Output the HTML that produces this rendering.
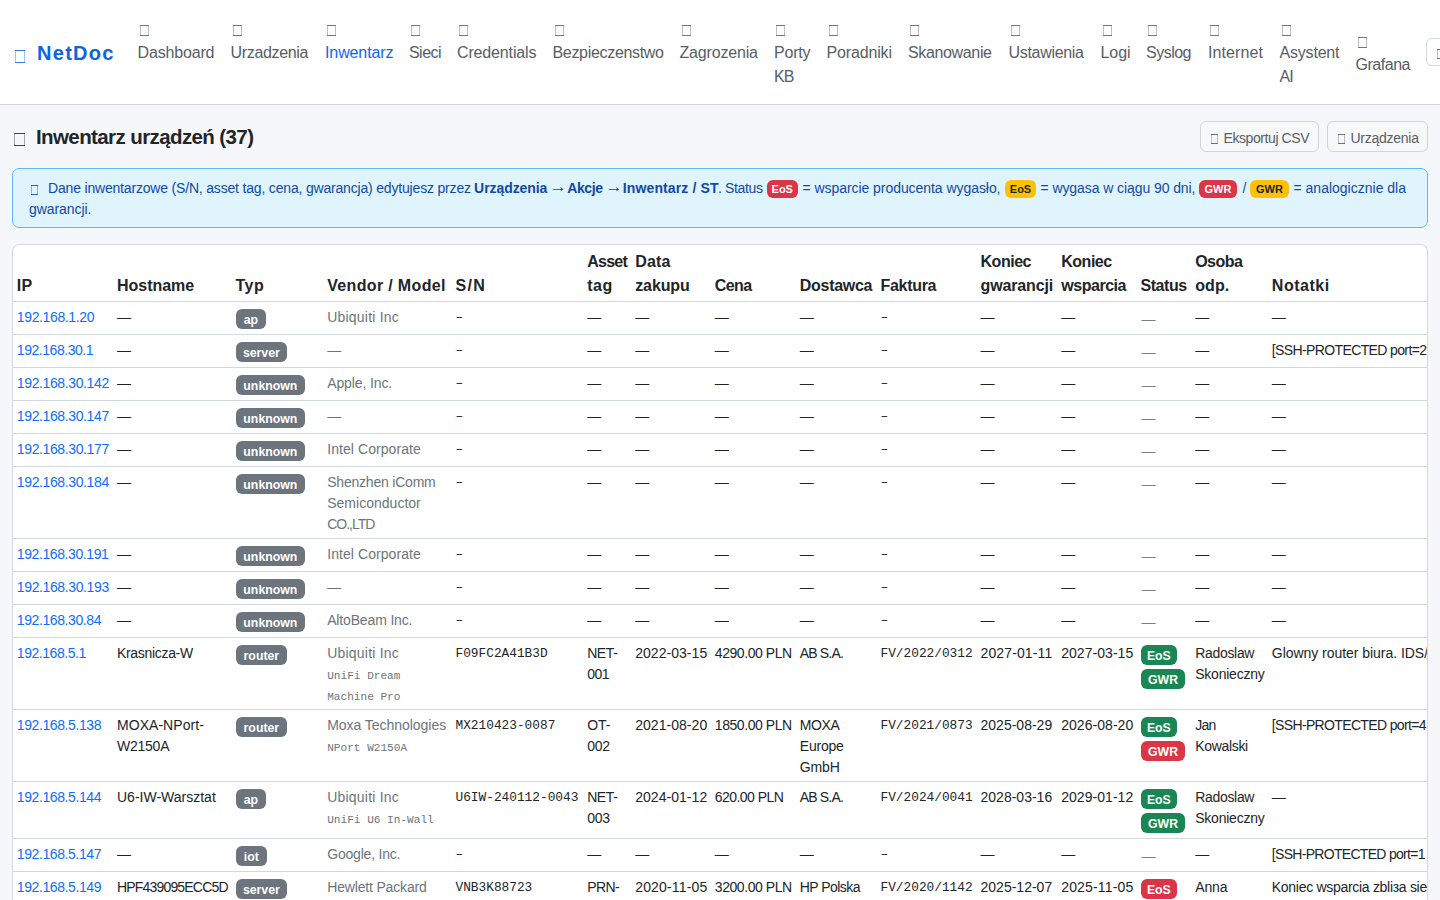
<!DOCTYPE html>
<html lang="pl"><head><meta charset="utf-8"><title>NetDoc - Inwentarz</title>
<style>
*{box-sizing:border-box}
html,body{margin:0;padding:0}
body{width:1440px;height:900px;overflow:hidden;background:#f6f7fa;font-family:"Liberation Sans",sans-serif;color:#212529;position:relative}
.tf{display:inline-block;position:relative;width:9px;height:11px;border:solid currentColor;border-width:1px 0;opacity:.85}
.tf::before{content:"";position:absolute;left:0;right:0;top:0;bottom:0;border:solid currentColor;border-width:0 1px;opacity:.45}
#nav{position:absolute;left:0;top:0;width:1440px;height:105px;background:#fff;border-bottom:1px solid #d2d7e0}
#brand{position:absolute;left:15px;top:39px;font-size:20px;font-weight:700;color:#0c64e4;line-height:28px;white-space:nowrap}
#brand .tf{width:10px;height:13px;margin-right:12px;position:relative;top:3px}
.ni{position:absolute;top:19px;font-size:16px;line-height:24px;color:#565e66;white-space:nowrap}
.ni .tf{display:block;margin:6px 0 5px 2px;height:11px;width:9px}
.ni.act{color:#0d69f0}
#navbtn{position:absolute;left:1426px;top:38px;width:40px;height:28px;border:1px solid #d2d7e0;border-radius:6px;background:#fff;color:#565e66}
#navbtn .tf{position:absolute;left:10px;top:10px;width:8px;height:10px}
h1{position:absolute;left:14px;top:123px;margin:0;font-size:20.5px;line-height:28px;font-weight:700;color:#212529;white-space:nowrap}
h1 .tf{width:11px;height:13px;margin-right:11px;position:relative;top:2px}
.btn{position:absolute;top:121px;height:31px;border:1px solid #d0d5dd;border-radius:6px;font-size:14px;line-height:32px;color:#565e66;padding:0 0 0 10px;white-space:nowrap;background:#f7f8fa}
.btn .tf{width:7px;height:10px;margin-right:5.5px;position:relative;top:1px}
#alert{position:absolute;left:12px;top:168px;width:1416px;height:60px;background:#e0f4fe;border:1px solid #64b5f6;border-radius:7px;color:#0f4aa6;font-size:14px;line-height:21px}
#alert span{position:absolute;white-space:nowrap}
#alert span span{position:static}
#alert .b{font-weight:700}
#alert .tf{width:7px;height:10px}
#alert .ab{font-size:11px;font-weight:700;line-height:18px;height:18px;border-radius:6px;color:#fff;text-align:center}
.ab.r{background:#dc3545}.ab.y{background:#ffc107;color:#212529 !important}
#card{position:absolute;left:12px;top:244px;width:1416px;height:700px;background:#fff;border:1px solid #d2d7e0;border-radius:7px;overflow:hidden}
table{border-collapse:collapse;table-layout:fixed;position:absolute;left:0;top:0;width:1755px}
th,td{padding:5px 4px 3px;vertical-align:top;text-align:left;border-bottom:1px solid #d2d7e0;white-space:nowrap;overflow:visible}
th{font-size:16px;line-height:24px;font-weight:700;vertical-align:bottom;color:#212529;height:56px;padding:4px 4px 3px}
th .l{height:24px}
td{font-size:14px;line-height:21px;color:#212529}
td .l{height:21px}
td .bl{height:24px;padding-top:2px}
a.ip{color:#0d6efd}
.mut{color:#6c757d}
.mono{font-family:"Liberation Mono",monospace;font-size:12.8px;line-height:1;position:relative;top:-1px}
.mm{font-family:"Liberation Mono",monospace;font-size:11.1px;color:#6c757d;line-height:1}
.sd{color:#78808a;font-size:14px;position:relative;top:2px;left:1px}
.bdg{display:block;font-size:12.3px;font-weight:700;line-height:22px;height:20px;border-radius:6px;color:#fff;text-align:center}
.sec{background:#6c757d}.ok{background:#198754}.bad{background:#dc3545}

</style></head><body>
<div id="nav">
<div id="brand"><span class="tf"></span><span style="letter-spacing:1.297px">NetDoc</span></div>
<div class="ni" style="left:137.5px"><span class="tf"></span><span style="letter-spacing:-0.160px">Dashboard</span></div>
<div class="ni" style="left:230.5px"><span class="tf"></span><span style="letter-spacing:-0.326px">Urzadzenia</span></div>
<div class="ni act" style="left:325px"><span class="tf"></span><span style="letter-spacing:-0.109px">Inwentarz</span></div>
<div class="ni" style="left:409px"><span class="tf"></span><span style="letter-spacing:-0.547px">Sieci</span></div>
<div class="ni" style="left:457px"><span class="tf"></span><span style="letter-spacing:-0.144px">Credentials</span></div>
<div class="ni" style="left:552.5px"><span class="tf"></span><span style="letter-spacing:-0.317px">Bezpieczenstwo</span></div>
<div class="ni" style="left:679.5px"><span class="tf"></span><span style="letter-spacing:-0.172px">Zagrozenia</span></div>
<div class="ni" style="left:774px"><span class="tf"></span><span style="letter-spacing:-0.211px">Porty</span><br><span style="letter-spacing:-1.000px">KB</span></div>
<div class="ni" style="left:826.5px"><span class="tf"></span><span style="letter-spacing:-0.150px">Poradniki</span></div>
<div class="ni" style="left:908px"><span class="tf"></span><span style="letter-spacing:-0.352px">Skanowanie</span></div>
<div class="ni" style="left:1008.5px"><span class="tf"></span><span style="letter-spacing:-0.307px">Ustawienia</span></div>
<div class="ni" style="left:1100.5px"><span class="tf"></span><span style="letter-spacing:-0.083px">Logi</span></div>
<div class="ni" style="left:1146px"><span class="tf"></span><span style="letter-spacing:-0.506px">Syslog</span></div>
<div class="ni" style="left:1208px"><span class="tf"></span><span style="letter-spacing:0.105px">Internet</span></div>
<div class="ni" style="left:1279.5px"><span class="tf"></span><span style="letter-spacing:-0.194px">Asystent</span><br><span style="letter-spacing:-1.000px">AI</span></div>
<div class="ni" style="left:1355.5px;top:31px"><span class="tf"></span><span style="letter-spacing:-0.469px">Grafana</span></div>
<div id="navbtn"><span class="tf"></span></div>
</div>
<h1><span class="tf"></span><span style="letter-spacing:-0.602px">Inwentarz urządzeń (37)</span></h1>
<div class="btn" style="left:1200px;width:119px"><span class="tf"></span><span style="letter-spacing:-0.421px">Eksportuj CSV</span></div>
<div class="btn" style="left:1327px;width:101px"><span class="tf"></span><span style="letter-spacing:-0.259px">Urządzenia</span></div>
<div id="alert">
<span class="tf" style="left:18px;top:16px"></span>
<span style="left:35px;top:9px"><span style="letter-spacing:-0.182px">Dane inwentarzowe (S/N, asset tag, cena, gwarancja) edytujesz przez</span></span>
<span class="b" style="left:461.1px;top:9px"><span style="letter-spacing:-0.069px">Urządzenia</span></span>
<span class="b" style="left:536.8px;top:7px;font-size:17px">→</span>
<span class="b" style="left:554.2px;top:9px"><span style="letter-spacing:-0.390px">Akcje</span></span>
<span class="b" style="left:592.5px;top:7px;font-size:17px">→</span>
<span class="b" style="left:609.8px;top:9px"><span style="letter-spacing:0.121px">Inwentarz / ST</span></span>
<span style="left:705px;top:9px"><span style="letter-spacing:-0.353px">. Status</span></span>
<span style="left:789.5px;top:9px"><span style="letter-spacing:-0.055px">= wsparcie producenta wygasło,</span></span>
<span style="left:1027.5px;top:9px"><span style="letter-spacing:-0.079px">= wygasa w ciągu 90 dni,</span></span>
<span style="left:1229.5px;top:9px"><span style="letter-spacing:1.500px">/</span></span>
<span style="left:1280.5px;top:9px"><span style="letter-spacing:0.001px">= analogicznie dla</span></span>
<span class="ab r" style="left:753.5px;top:11px;width:31.5px">EoS</span>
<span class="ab y" style="left:992px;top:11px;width:31px">EoS</span>
<span class="ab r" style="left:1186px;top:11px;width:38px">GWR</span>
<span class="ab y" style="left:1237px;top:11px;width:39px">GWR</span>
<span style="left:16px;top:30px"><span style="letter-spacing:-0.059px">gwarancji.</span></span>
</div>
<div id="card"><table><colgroup><col style="width:100px"><col style="width:119px"><col style="width:91px"><col style="width:129px"><col style="width:131px"><col style="width:48px"><col style="width:80px"><col style="width:85px"><col style="width:81px"><col style="width:100px"><col style="width:81px"><col style="width:79px"><col style="width:54px"><col style="width:77px"><col style="width:500px"></colgroup>
<thead><tr><th><div class="l" style="margin-left:-0.2px"><span style="letter-spacing:0.275px">IP</span></div></th><th><div class="l" style="margin-left:0.0px"><span style="letter-spacing:-0.023px">Hostname</span></div></th><th><div class="l" style="margin-left:-0.5px"><span style="letter-spacing:0.517px">Typ</span></div></th><th><div class="l" style="margin-left:0.2px"><span style="letter-spacing:0.346px">Vendor / Model</span></div></th><th><div class="l" style="margin-left:-0.5px"><span style="letter-spacing:1.314px">S/N</span></div></th><th><div class="l" style="margin-left:0.2px"><span style="letter-spacing:-0.745px">Asset</span></div><div class="l" style="margin-left:0.2px"><span style="letter-spacing:0.500px">tag</span></div></th><th><div class="l" style="margin-left:0.2px"><span style="letter-spacing:0.204px">Data</span></div><div class="l" style="margin-left:0.2px"><span style="letter-spacing:-0.105px">zakupu</span></div></th><th><div class="l" style="margin-left:-0.2px"><span style="letter-spacing:-0.575px">Cena</span></div></th><th><div class="l" style="margin-left:-0.2px"><span style="letter-spacing:-0.286px">Dostawca</span></div></th><th><div class="l" style="margin-left:-0.5px"><span style="letter-spacing:-0.299px">Faktura</span></div></th><th><div class="l" style="margin-left:-0.5px"><span style="letter-spacing:-0.469px">Koniec</span></div><div class="l" style="margin-left:-0.5px"><span style="letter-spacing:-0.139px">gwarancji</span></div></th><th><div class="l" style="margin-left:-0.8px"><span style="letter-spacing:-0.469px">Koniec</span></div><div class="l" style="margin-left:-0.8px"><span style="letter-spacing:-0.455px">wsparcia</span></div></th><th><div class="l" style="margin-left:-0.5px"><span style="letter-spacing:-0.441px">Status</span></div></th><th><div class="l" style="margin-left:0.2px"><span style="letter-spacing:-0.549px">Osoba</span></div><div class="l" style="margin-left:0.2px"><span style="letter-spacing:0.078px">odp.</span></div></th><th><div class="l" style="margin-left:-0.2px"><span style="letter-spacing:0.528px">Notatki</span></div></th></tr></thead><tbody>
<tr style="height:33px"><td><div class="l" style="margin-left:-0.2px"><a class="ip"><span style="letter-spacing:-0.368px">192.168.1.20</span></a></div></td><td><div class="l" style="margin-left:0.0px"><span class="d">—</span></div></td><td><div class="bl" style="margin-left:0.0px"><span class="bdg sec" style="width:29.7px">ap</span></div></td><td><div class="l" style="margin-left:0.2px"><span class="mut"><span style="letter-spacing:0.212px">Ubiquiti Inc</span></span></div></td><td><div class="l" style="margin-left:-0.5px"><span class="mono">–</span></div></td><td><div class="l" style="margin-left:0.2px"><span class="d">—</span></div></td><td><div class="l" style="margin-left:0.2px"><span class="d">—</span></div></td><td><div class="l" style="margin-left:-0.2px"><span class="d">—</span></div></td><td><div class="l" style="margin-left:-0.2px"><span class="d">—</span></div></td><td><div class="l" style="margin-left:-0.5px"><span class="mono">–</span></div></td><td><div class="l" style="margin-left:-0.5px"><span class="d">—</span></div></td><td><div class="l" style="margin-left:-0.8px"><span class="d">—</span></div></td><td><div class="l" style="margin-left:-0.5px"><span class="sd">—</span></div></td><td><div class="l" style="margin-left:0.2px"><span class="d">—</span></div></td><td><div class="l" style="margin-left:-0.2px"><span class="d">—</span></div></td></tr>
<tr style="height:33px"><td><div class="l" style="margin-left:-0.2px"><a class="ip"><span style="letter-spacing:-0.459px">192.168.30.1</span></a></div></td><td><div class="l" style="margin-left:0.0px"><span class="d">—</span></div></td><td><div class="bl" style="margin-left:0.0px"><span class="bdg sec" style="width:50.7px">server</span></div></td><td><div class="l" style="margin-left:0.2px"><span class="mut"><span class="d">—</span></span></div></td><td><div class="l" style="margin-left:-0.5px"><span class="mono">–</span></div></td><td><div class="l" style="margin-left:0.2px"><span class="d">—</span></div></td><td><div class="l" style="margin-left:0.2px"><span class="d">—</span></div></td><td><div class="l" style="margin-left:-0.2px"><span class="d">—</span></div></td><td><div class="l" style="margin-left:-0.2px"><span class="d">—</span></div></td><td><div class="l" style="margin-left:-0.5px"><span class="mono">–</span></div></td><td><div class="l" style="margin-left:-0.5px"><span class="d">—</span></div></td><td><div class="l" style="margin-left:-0.8px"><span class="d">—</span></div></td><td><div class="l" style="margin-left:-0.5px"><span class="sd">—</span></div></td><td><div class="l" style="margin-left:0.2px"><span class="d">—</span></div></td><td><div class="l" style="margin-left:-0.2px"><span style="letter-spacing:-0.623px">[SSH-PROTECTED port=2</span></div></td></tr>
<tr style="height:33px"><td><div class="l" style="margin-left:-0.2px"><a class="ip"><span style="letter-spacing:-0.379px">192.168.30.142</span></a></div></td><td><div class="l" style="margin-left:0.0px"><span class="d">—</span></div></td><td><div class="bl" style="margin-left:0.0px"><span class="bdg sec" style="width:68.7px">unknown</span></div></td><td><div class="l" style="margin-left:0.2px"><span class="mut"><span style="letter-spacing:-0.116px">Apple, Inc.</span></span></div></td><td><div class="l" style="margin-left:-0.5px"><span class="mono">–</span></div></td><td><div class="l" style="margin-left:0.2px"><span class="d">—</span></div></td><td><div class="l" style="margin-left:0.2px"><span class="d">—</span></div></td><td><div class="l" style="margin-left:-0.2px"><span class="d">—</span></div></td><td><div class="l" style="margin-left:-0.2px"><span class="d">—</span></div></td><td><div class="l" style="margin-left:-0.5px"><span class="mono">–</span></div></td><td><div class="l" style="margin-left:-0.5px"><span class="d">—</span></div></td><td><div class="l" style="margin-left:-0.8px"><span class="d">—</span></div></td><td><div class="l" style="margin-left:-0.5px"><span class="sd">—</span></div></td><td><div class="l" style="margin-left:0.2px"><span class="d">—</span></div></td><td><div class="l" style="margin-left:-0.2px"><span class="d">—</span></div></td></tr>
<tr style="height:33px"><td><div class="l" style="margin-left:-0.2px"><a class="ip"><span style="letter-spacing:-0.379px">192.168.30.147</span></a></div></td><td><div class="l" style="margin-left:0.0px"><span class="d">—</span></div></td><td><div class="bl" style="margin-left:0.0px"><span class="bdg sec" style="width:68.7px">unknown</span></div></td><td><div class="l" style="margin-left:0.2px"><span class="mut"><span class="d">—</span></span></div></td><td><div class="l" style="margin-left:-0.5px"><span class="mono">–</span></div></td><td><div class="l" style="margin-left:0.2px"><span class="d">—</span></div></td><td><div class="l" style="margin-left:0.2px"><span class="d">—</span></div></td><td><div class="l" style="margin-left:-0.2px"><span class="d">—</span></div></td><td><div class="l" style="margin-left:-0.2px"><span class="d">—</span></div></td><td><div class="l" style="margin-left:-0.5px"><span class="mono">–</span></div></td><td><div class="l" style="margin-left:-0.5px"><span class="d">—</span></div></td><td><div class="l" style="margin-left:-0.8px"><span class="d">—</span></div></td><td><div class="l" style="margin-left:-0.5px"><span class="sd">—</span></div></td><td><div class="l" style="margin-left:0.2px"><span class="d">—</span></div></td><td><div class="l" style="margin-left:-0.2px"><span class="d">—</span></div></td></tr>
<tr style="height:33px"><td><div class="l" style="margin-left:-0.2px"><a class="ip"><span style="letter-spacing:-0.379px">192.168.30.177</span></a></div></td><td><div class="l" style="margin-left:0.0px"><span class="d">—</span></div></td><td><div class="bl" style="margin-left:0.0px"><span class="bdg sec" style="width:68.7px">unknown</span></div></td><td><div class="l" style="margin-left:0.2px"><span class="mut"><span style="letter-spacing:0.071px">Intel Corporate</span></span></div></td><td><div class="l" style="margin-left:-0.5px"><span class="mono">–</span></div></td><td><div class="l" style="margin-left:0.2px"><span class="d">—</span></div></td><td><div class="l" style="margin-left:0.2px"><span class="d">—</span></div></td><td><div class="l" style="margin-left:-0.2px"><span class="d">—</span></div></td><td><div class="l" style="margin-left:-0.2px"><span class="d">—</span></div></td><td><div class="l" style="margin-left:-0.5px"><span class="mono">–</span></div></td><td><div class="l" style="margin-left:-0.5px"><span class="d">—</span></div></td><td><div class="l" style="margin-left:-0.8px"><span class="d">—</span></div></td><td><div class="l" style="margin-left:-0.5px"><span class="sd">—</span></div></td><td><div class="l" style="margin-left:0.2px"><span class="d">—</span></div></td><td><div class="l" style="margin-left:-0.2px"><span class="d">—</span></div></td></tr>
<tr style="height:72px"><td><div class="l" style="margin-left:-0.2px"><a class="ip"><span style="letter-spacing:-0.379px">192.168.30.184</span></a></div></td><td><div class="l" style="margin-left:0.0px"><span class="d">—</span></div></td><td><div class="bl" style="margin-left:0.0px"><span class="bdg sec" style="width:68.7px">unknown</span></div></td><td><div class="l" style="margin-left:0.2px"><span class="mut"><span style="letter-spacing:-0.206px">Shenzhen iComm</span></span></div><div class="l" style="margin-left:0.2px"><span class="mut"><span style="letter-spacing:0.017px">Semiconductor</span></span></div><div class="l" style="margin-left:0.2px"><span class="mut"><span style="letter-spacing:-1.000px">CO.,LTD</span></span></div></td><td><div class="l" style="margin-left:-0.5px"><span class="mono">–</span></div></td><td><div class="l" style="margin-left:0.2px"><span class="d">—</span></div></td><td><div class="l" style="margin-left:0.2px"><span class="d">—</span></div></td><td><div class="l" style="margin-left:-0.2px"><span class="d">—</span></div></td><td><div class="l" style="margin-left:-0.2px"><span class="d">—</span></div></td><td><div class="l" style="margin-left:-0.5px"><span class="mono">–</span></div></td><td><div class="l" style="margin-left:-0.5px"><span class="d">—</span></div></td><td><div class="l" style="margin-left:-0.8px"><span class="d">—</span></div></td><td><div class="l" style="margin-left:-0.5px"><span class="sd">—</span></div></td><td><div class="l" style="margin-left:0.2px"><span class="d">—</span></div></td><td><div class="l" style="margin-left:-0.2px"><span class="d">—</span></div></td></tr>
<tr style="height:33px"><td><div class="l" style="margin-left:-0.2px"><a class="ip"><span style="letter-spacing:-0.410px">192.168.30.191</span></a></div></td><td><div class="l" style="margin-left:0.0px"><span class="d">—</span></div></td><td><div class="bl" style="margin-left:0.0px"><span class="bdg sec" style="width:68.7px">unknown</span></div></td><td><div class="l" style="margin-left:0.2px"><span class="mut"><span style="letter-spacing:0.071px">Intel Corporate</span></span></div></td><td><div class="l" style="margin-left:-0.5px"><span class="mono">–</span></div></td><td><div class="l" style="margin-left:0.2px"><span class="d">—</span></div></td><td><div class="l" style="margin-left:0.2px"><span class="d">—</span></div></td><td><div class="l" style="margin-left:-0.2px"><span class="d">—</span></div></td><td><div class="l" style="margin-left:-0.2px"><span class="d">—</span></div></td><td><div class="l" style="margin-left:-0.5px"><span class="mono">–</span></div></td><td><div class="l" style="margin-left:-0.5px"><span class="d">—</span></div></td><td><div class="l" style="margin-left:-0.8px"><span class="d">—</span></div></td><td><div class="l" style="margin-left:-0.5px"><span class="sd">—</span></div></td><td><div class="l" style="margin-left:0.2px"><span class="d">—</span></div></td><td><div class="l" style="margin-left:-0.2px"><span class="d">—</span></div></td></tr>
<tr style="height:33px"><td><div class="l" style="margin-left:-0.2px"><a class="ip"><span style="letter-spacing:-0.379px">192.168.30.193</span></a></div></td><td><div class="l" style="margin-left:0.0px"><span class="d">—</span></div></td><td><div class="bl" style="margin-left:0.0px"><span class="bdg sec" style="width:68.7px">unknown</span></div></td><td><div class="l" style="margin-left:0.2px"><span class="mut"><span class="d">—</span></span></div></td><td><div class="l" style="margin-left:-0.5px"><span class="mono">–</span></div></td><td><div class="l" style="margin-left:0.2px"><span class="d">—</span></div></td><td><div class="l" style="margin-left:0.2px"><span class="d">—</span></div></td><td><div class="l" style="margin-left:-0.2px"><span class="d">—</span></div></td><td><div class="l" style="margin-left:-0.2px"><span class="d">—</span></div></td><td><div class="l" style="margin-left:-0.5px"><span class="mono">–</span></div></td><td><div class="l" style="margin-left:-0.5px"><span class="d">—</span></div></td><td><div class="l" style="margin-left:-0.8px"><span class="d">—</span></div></td><td><div class="l" style="margin-left:-0.5px"><span class="sd">—</span></div></td><td><div class="l" style="margin-left:0.2px"><span class="d">—</span></div></td><td><div class="l" style="margin-left:-0.2px"><span class="d">—</span></div></td></tr>
<tr style="height:33px"><td><div class="l" style="margin-left:-0.2px"><a class="ip"><span style="letter-spacing:-0.403px">192.168.30.84</span></a></div></td><td><div class="l" style="margin-left:0.0px"><span class="d">—</span></div></td><td><div class="bl" style="margin-left:0.0px"><span class="bdg sec" style="width:68.7px">unknown</span></div></td><td><div class="l" style="margin-left:0.2px"><span class="mut"><span style="letter-spacing:-0.155px">AltoBeam Inc.</span></span></div></td><td><div class="l" style="margin-left:-0.5px"><span class="mono">–</span></div></td><td><div class="l" style="margin-left:0.2px"><span class="d">—</span></div></td><td><div class="l" style="margin-left:0.2px"><span class="d">—</span></div></td><td><div class="l" style="margin-left:-0.2px"><span class="d">—</span></div></td><td><div class="l" style="margin-left:-0.2px"><span class="d">—</span></div></td><td><div class="l" style="margin-left:-0.5px"><span class="mono">–</span></div></td><td><div class="l" style="margin-left:-0.5px"><span class="d">—</span></div></td><td><div class="l" style="margin-left:-0.8px"><span class="d">—</span></div></td><td><div class="l" style="margin-left:-0.5px"><span class="sd">—</span></div></td><td><div class="l" style="margin-left:0.2px"><span class="d">—</span></div></td><td><div class="l" style="margin-left:-0.2px"><span class="d">—</span></div></td></tr>
<tr style="height:72px"><td><div class="l" style="margin-left:-0.2px"><a class="ip"><span style="letter-spacing:-0.457px">192.168.5.1</span></a></div></td><td><div class="l" style="margin-left:0.0px"><span style="letter-spacing:-0.316px">Krasnicza-W</span></div></td><td><div class="bl" style="margin-left:0.0px"><span class="bdg sec" style="width:50.7px">router</span></div></td><td><div class="l" style="margin-left:0.2px"><span class="mut"><span style="letter-spacing:0.212px">Ubiquiti Inc</span></span></div><div class="l" style="margin-left:0.2px"><span class="mm">UniFi Dream</span></div><div class="l" style="margin-left:0.2px"><span class="mm">Machine Pro</span></div></td><td><div class="l" style="margin-left:-0.5px"><span class="mono">F09FC2A41B3D</span></div></td><td><div class="l" style="margin-left:0.2px"><span style="letter-spacing:-0.430px">NET-</span></div><div class="l" style="margin-left:0.2px"><span style="letter-spacing:-0.530px">001</span></div></td><td><div class="l" style="margin-left:0.2px"><span style="letter-spacing:0.042px">2022-03-15</span></div></td><td><div class="l" style="margin-left:-0.2px"><span style="letter-spacing:-0.433px">4290.00 PLN</span></div></td><td><div class="l" style="margin-left:-0.2px"><span style="letter-spacing:-0.839px">AB S.A.</span></div></td><td><div class="l" style="margin-left:-0.5px"><span class="mono">FV/2022/0312</span></div></td><td><div class="l" style="margin-left:-0.5px"><span style="letter-spacing:0.125px">2027-01-11</span></div></td><td><div class="l" style="margin-left:-0.8px"><span style="letter-spacing:0.042px">2027-03-15</span></div></td><td><div class="bl" style="margin-left:0.0px"><span class="bdg ok" style="width:35.7px">EoS</span></div><div class="bl" style="margin-left:0.0px"><span class="bdg ok" style="width:44px">GWR</span></div></td><td><div class="l" style="margin-left:0.2px"><span style="letter-spacing:-0.312px">Radoslaw</span></div><div class="l" style="margin-left:0.2px"><span style="letter-spacing:-0.222px">Skonieczny</span></div></td><td><div class="l" style="margin-left:-0.2px"><span style="letter-spacing:-0.040px">Glowny router biura. IDS/</span></div></td></tr>
<tr style="height:72px"><td><div class="l" style="margin-left:-0.2px"><a class="ip"><span style="letter-spacing:-0.403px">192.168.5.138</span></a></div></td><td><div class="l" style="margin-left:0.0px"><span style="letter-spacing:0.046px">MOXA-NPort-</span></div><div class="l" style="margin-left:0.0px"><span style="letter-spacing:-0.241px">W2150A</span></div></td><td><div class="bl" style="margin-left:0.0px"><span class="bdg sec" style="width:50.7px">router</span></div></td><td><div class="l" style="margin-left:0.2px"><span class="mut"><span style="letter-spacing:-0.038px">Moxa Technologies</span></span></div><div class="l" style="margin-left:0.2px"><span class="mm">NPort W2150A</span></div></td><td><div class="l" style="margin-left:-0.5px"><span class="mono">MX210423-0087</span></div></td><td><div class="l" style="margin-left:0.2px"><span style="letter-spacing:-0.022px">OT-</span></div><div class="l" style="margin-left:0.2px"><span style="letter-spacing:-0.280px">002</span></div></td><td><div class="l" style="margin-left:0.2px"><span style="letter-spacing:0.042px">2021-08-20</span></div></td><td><div class="l" style="margin-left:-0.2px"><span style="letter-spacing:-0.433px">1850.00 PLN</span></div></td><td><div class="l" style="margin-left:-0.2px"><span style="letter-spacing:-0.411px">MOXA</span></div><div class="l" style="margin-left:-0.2px"><span style="letter-spacing:-0.231px">Europe</span></div><div class="l" style="margin-left:-0.2px"><span style="letter-spacing:-0.151px">GmbH</span></div></td><td><div class="l" style="margin-left:-0.5px"><span class="mono">FV/2021/0873</span></div></td><td><div class="l" style="margin-left:-0.5px"><span style="letter-spacing:0.008px">2025-08-29</span></div></td><td><div class="l" style="margin-left:-0.8px"><span style="letter-spacing:0.042px">2026-08-20</span></div></td><td><div class="bl" style="margin-left:0.0px"><span class="bdg ok" style="width:35.7px">EoS</span></div><div class="bl" style="margin-left:0.0px"><span class="bdg bad" style="width:44px">GWR</span></div></td><td><div class="l" style="margin-left:0.2px"><span style="letter-spacing:-0.789px">Jan</span></div><div class="l" style="margin-left:0.2px"><span style="letter-spacing:-0.321px">Kowalski</span></div></td><td><div class="l" style="margin-left:-0.2px"><span style="letter-spacing:-0.648px">[SSH-PROTECTED port=4</span></div></td></tr>
<tr style="height:57px"><td><div class="l" style="margin-left:-0.2px"><a class="ip"><span style="letter-spacing:-0.403px">192.168.5.144</span></a></div></td><td><div class="l" style="margin-left:0.0px"><span style="letter-spacing:0.001px">U6-IW-Warsztat</span></div></td><td><div class="bl" style="margin-left:0.0px"><span class="bdg sec" style="width:29.7px">ap</span></div></td><td><div class="l" style="margin-left:0.2px"><span class="mut"><span style="letter-spacing:0.212px">Ubiquiti Inc</span></span></div><div class="l" style="margin-left:0.2px"><span class="mm">UniFi U6 In-Wall</span></div></td><td><div class="l" style="margin-left:-0.5px"><span class="mono">U6IW-240112-0043</span></div></td><td><div class="l" style="margin-left:0.2px"><span style="letter-spacing:-0.430px">NET-</span></div><div class="l" style="margin-left:0.2px"><span style="letter-spacing:-0.280px">003</span></div></td><td><div class="l" style="margin-left:0.2px"><span style="letter-spacing:0.042px">2024-01-12</span></div></td><td><div class="l" style="margin-left:-0.2px"><span style="letter-spacing:-0.550px">620.00 PLN</span></div></td><td><div class="l" style="margin-left:-0.2px"><span style="letter-spacing:-0.839px">AB S.A.</span></div></td><td><div class="l" style="margin-left:-0.5px"><span class="mono">FV/2024/0041</span></div></td><td><div class="l" style="margin-left:-0.5px"><span style="letter-spacing:0.008px">2028-03-16</span></div></td><td><div class="l" style="margin-left:-0.8px"><span style="letter-spacing:0.042px">2029-01-12</span></div></td><td><div class="bl" style="margin-left:0.0px"><span class="bdg ok" style="width:35.7px">EoS</span></div><div class="bl" style="margin-left:0.0px"><span class="bdg ok" style="width:44px">GWR</span></div></td><td><div class="l" style="margin-left:0.2px"><span style="letter-spacing:-0.312px">Radoslaw</span></div><div class="l" style="margin-left:0.2px"><span style="letter-spacing:-0.222px">Skonieczny</span></div></td><td><div class="l" style="margin-left:-0.2px"><span class="d">—</span></div></td></tr>
<tr style="height:33px"><td><div class="l" style="margin-left:-0.2px"><a class="ip"><span style="letter-spacing:-0.403px">192.168.5.147</span></a></div></td><td><div class="l" style="margin-left:0.0px"><span class="d">—</span></div></td><td><div class="bl" style="margin-left:0.0px"><span class="bdg sec" style="width:30.7px">iot</span></div></td><td><div class="l" style="margin-left:0.2px"><span class="mut"><span style="letter-spacing:-0.200px">Google, Inc.</span></span></div></td><td><div class="l" style="margin-left:-0.5px"><span class="mono">–</span></div></td><td><div class="l" style="margin-left:0.2px"><span class="d">—</span></div></td><td><div class="l" style="margin-left:0.2px"><span class="d">—</span></div></td><td><div class="l" style="margin-left:-0.2px"><span class="d">—</span></div></td><td><div class="l" style="margin-left:-0.2px"><span class="d">—</span></div></td><td><div class="l" style="margin-left:-0.5px"><span class="mono">–</span></div></td><td><div class="l" style="margin-left:-0.5px"><span class="d">—</span></div></td><td><div class="l" style="margin-left:-0.8px"><span class="d">—</span></div></td><td><div class="l" style="margin-left:-0.5px"><span class="sd">—</span></div></td><td><div class="l" style="margin-left:0.2px"><span class="d">—</span></div></td><td><div class="l" style="margin-left:-0.2px"><span style="letter-spacing:-0.698px">[SSH-PROTECTED port=1</span></div></td></tr>
<tr style="height:40px"><td><div class="l" style="margin-left:-0.2px"><a class="ip"><span style="letter-spacing:-0.403px">192.168.5.149</span></a></div></td><td><div class="l" style="margin-left:0.0px"><span style="letter-spacing:-0.821px">HPF439095ECC5D</span></div></td><td><div class="bl" style="margin-left:0.0px"><span class="bdg sec" style="width:50.7px">server</span></div></td><td><div class="l" style="margin-left:0.2px"><span class="mut"><span style="letter-spacing:-0.167px">Hewlett Packard</span></span></div></td><td><div class="l" style="margin-left:-0.5px"><span class="mono">VNB3K88723</span></div></td><td><div class="l" style="margin-left:0.2px"><span style="letter-spacing:-0.545px">PRN-</span></div><div class="l" style="margin-left:0.2px"><span style="letter-spacing:-0.280px">004</span></div></td><td><div class="l" style="margin-left:0.2px"><span style="letter-spacing:0.158px">2020-11-05</span></div></td><td><div class="l" style="margin-left:-0.2px"><span style="letter-spacing:-0.433px">3200.00 PLN</span></div></td><td><div class="l" style="margin-left:-0.2px"><span style="letter-spacing:-0.551px">HP Polska</span></div></td><td><div class="l" style="margin-left:-0.5px"><span class="mono">FV/2020/1142</span></div></td><td><div class="l" style="margin-left:-0.5px"><span style="letter-spacing:0.008px">2025-12-07</span></div></td><td><div class="l" style="margin-left:-0.8px"><span style="letter-spacing:0.158px">2025-11-05</span></div></td><td><div class="bl" style="margin-left:0.0px"><span class="bdg bad" style="width:35.7px">EoS</span></div></td><td><div class="l" style="margin-left:0.2px"><span style="letter-spacing:-0.134px">Anna</span></div><div class="l" style="margin-left:0.2px"><span style="letter-spacing:-0.624px">Nowak</span></div></td><td><div class="l" style="margin-left:-0.2px"><span style="letter-spacing:-0.297px">Koniec wsparcia zbliзa sie</span></div></td></tr>
</tbody></table></div>
</body></html>
